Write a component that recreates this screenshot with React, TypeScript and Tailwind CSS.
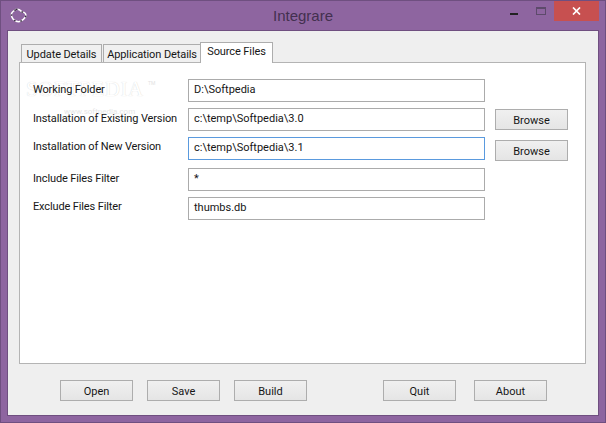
const textFont = 'text-[11px] text-[#161616]';

function Field({ value, focused }: { value: string; focused?: boolean }) {
  return (
    <div className={`h-[23px] w-[297px] shrink-0 border bg-white pl-[5px] pb-[1px] flex items-center ${focused ? 'border-[#5a9ade]' : 'border-[#ababab]'}`}>
      <span className={textFont}>{value}</span>
    </div>
  );
}

function Btn({ label, className }: { label: string; className?: string }) {
  return (
    <button className={`h-[21px] w-[73px] shrink-0 border border-[#adadad] bg-gradient-to-b from-[#f0f0f0] to-[#e5e5e5] pt-[3px] leading-[14px] ${textFont} ${className ?? ''}`}>
      {label}
    </button>
  );
}

function Row({ label, tight, children, className }: { label: string; tight?: boolean; children: React.ReactNode; className?: string }) {
  return (
    <div className={`flex items-start ${className ?? ''}`}>
      <span className={`w-[155px] shrink-0 whitespace-nowrap tracking-[-0.13px] ${tight ? '' : 'pt-[1px]'} ${textFont} leading-[19px]`}>{label}</span>
      {children}
    </div>
  );
}

export default function App() {
  return (
    <div
      className="w-[606px] h-[423px] bg-[#8e65a0] border border-[#6f4f80] flex flex-col overflow-hidden"
      style={{ fontFamily: 'Roboto, "Liberation Sans", sans-serif' }}
    >
      {/* title bar */}
      <div className="h-[29px] relative shrink-0">
        <svg className="absolute left-[9px] top-[7px]" width="18" height="16" viewBox="0 0 18 16" fill="none">
          <path d="M6 1.5 C9 0.5 10 2 12 4 C15 4 16.5 6 15.5 9 C14 11 13 12 11 13 C8 14.5 5 13 3 11 C1 8 1 5 3 3.5 Z" stroke="#fff" strokeWidth="1.5" />
          <path d="M6 1.5 C9 0.5 10 2 12 4 C15 4 16.5 6 15.5 9 C14 11 13 12 11 13 C8 14.5 5 13 3 11 C1 8 1 5 3 3.5 Z" stroke="#33283a" strokeWidth="1.5" strokeDasharray="1.5 5" />
        </svg>
        <div className="text-center text-[15px] leading-[20px] text-[#43304f] pt-[5px]" style={{ fontFamily: '"Liberation Sans", sans-serif' }}>
          Integrare
        </div>
        <div className="absolute left-[509px] top-[12px] w-[8px] h-[2px] bg-[#222]" />
        <div className="absolute left-[535px] top-[6px] w-[10px] h-[8px] border border-[#5d4a6b] border-t-2" />
        <div className="absolute left-[553px] top-0 w-[45px] h-[20px] bg-[#c75050] flex items-center justify-center">
          <svg width="9" height="8" viewBox="0 0 9 8">
            <path d="M1 0.5 L8 7.5 M8 0.5 L1 7.5" stroke="#fff" strokeWidth="1.7" />
          </svg>
        </div>
      </div>

      {/* client area */}
      <div className="ml-[6px] w-[592px] h-[386px] bg-[#efefef] border border-[#6f4f80] pl-[11px] pt-[11px]">
        <div className="flex items-end h-[20px] pl-[2px]">
          <div className={`h-[18px] w-[81px] border border-b-0 border-[#adadad] bg-[#f0f0f0] text-center leading-[19px] tracking-[-0.1px] ${textFont}`}>Update Details</div>
          <div className={`h-[18px] w-[98px] ml-[1px] border border-b-0 border-[#adadad] bg-[#f0f0f0] text-center leading-[19px] tracking-[-0.1px] ${textFont}`}>Application Details</div>
          <div className={`h-[21px] w-[73px] -ml-[1px] -mb-[1px] relative z-10 border border-b-0 border-[#adadad] bg-white text-center leading-[18px] tracking-[-0.1px] ${textFont}`}>Source Files</div>
        </div>

        <div className="relative w-[567px] h-[302px] bg-white border border-[#b4b4b4] pl-[13px] pt-[16px]">
          {/* watermark */}
          <span className="absolute left-[6px] top-[13px] text-[21px] leading-[26px] tracking-[0.5px] text-white [text-shadow:0_0_1px_#cfcfcf]" style={{ fontFamily: '"Liberation Serif", serif' }}>
            SOFTPEDIA
          </span>
          <span className="absolute left-[128px] top-[17px] text-[5px] leading-[6px] text-[#e2e2e2]">TM</span>
          <span className="absolute left-[44px] top-[44px] text-[8px] leading-[9px] text-[#e6e6e6]">www.softpedia.com</span>

          <div className="relative">
            <Row label="Working Folder">
              <Field value="D:\Softpedia" />
            </Row>
            <Row label="Installation of Existing Version" className="mt-[6px]">
              <Field value="c:\temp\Softpedia\3.0" />
              <Btn label="Browse" className="ml-[10px] mt-[1px]" />
            </Row>
            <Row label="Installation of New Version" tight className="mt-[6px]">
              <Field value="c:\temp\Softpedia\3.1" focused />
              <Btn label="Browse" className="ml-[10px] mt-[3px] -mb-[1px]" />
            </Row>
            <Row label="Include Files Filter" className="mt-[8px]">
              <Field value="*" />
            </Row>
            <Row label="Exclude Files Filter" tight className="mt-[6px]">
              <Field value="thumbs.db" />
            </Row>
          </div>
        </div>

        <div className="flex mt-[16px] pl-[41px]">
          <Btn label="Open" />
          <Btn label="Save" className="ml-[14px]" />
          <Btn label="Build" className="ml-[14px]" />
          <Btn label="Quit" className="ml-[76px]" />
          <Btn label="About" className="ml-[18px]" />
        </div>
      </div>
    </div>
  );
}
